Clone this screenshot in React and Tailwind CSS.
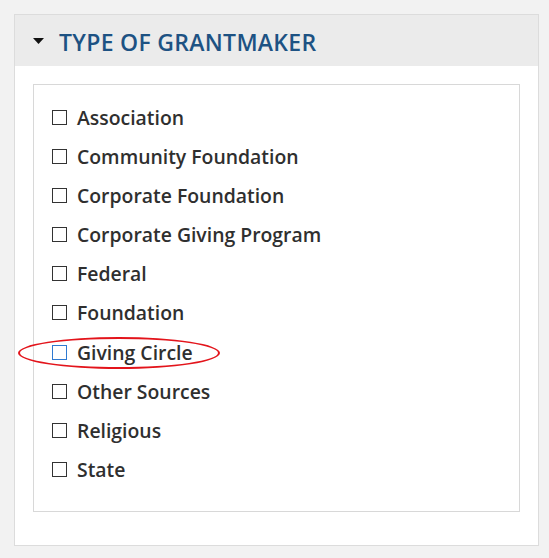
import React from "react";

const items = [
  "Association",
  "Community Foundation",
  "Corporate Foundation",
  "Corporate Giving Program",
  "Federal",
  "Foundation",
  "Giving Circle",
  "Other Sources",
  "Religious",
  "State",
];

export default function App() {
  return (
    <div
      className="w-[549px] h-[558px] bg-[#f2f2f2] pt-[14px] pl-[14px]"
      style={{ fontFamily: '"Open Sans", sans-serif' }}
    >
      <div className="w-[525px] h-[532px] bg-white border border-[#dcdcdc]">
        <div className="h-[51px] bg-[#ebebeb] flex items-center pl-[18px]">
          <svg width="11" height="6" viewBox="0 0 11 6" className="mr-[15px] mt-[1px]">
            <polygon points="0,0 11,0 5.5,6" fill="#111" />
          </svg>
          <span className="mt-[3px] text-[23px] font-semibold text-[#1d5283] tracking-[0.3px]">
            TYPE OF GRANTMAKER
          </span>
        </div>
        <div className="mt-[18px] ml-[18px] w-[487px] h-[428px] border border-[#d8d8d8] pt-[20px] pl-[18px]">
          {items.map((label) => {
            const hot = label === "Giving Circle";
            return (
              <div key={label} className="relative h-[39.1px] flex items-start">
                {hot && (
                  <div className="absolute left-[-34px] top-[-3px] w-[202px] h-[32px] rounded-[50%] border-2 border-[#e3141b]" />
                )}
                <span
                  className={`mt-[5px] w-[15px] h-[15px] border ${hot ? "border-[#2f7ad1]" : "border-[#333]"} bg-white`}
                />
                <span className="ml-[10px] mt-[1px] text-[19.4px] leading-[24px] font-semibold text-[#2f2f2f]">
                  {label}
                </span>
              </div>
            );
          })}
        </div>
      </div>
    </div>
  );
}
